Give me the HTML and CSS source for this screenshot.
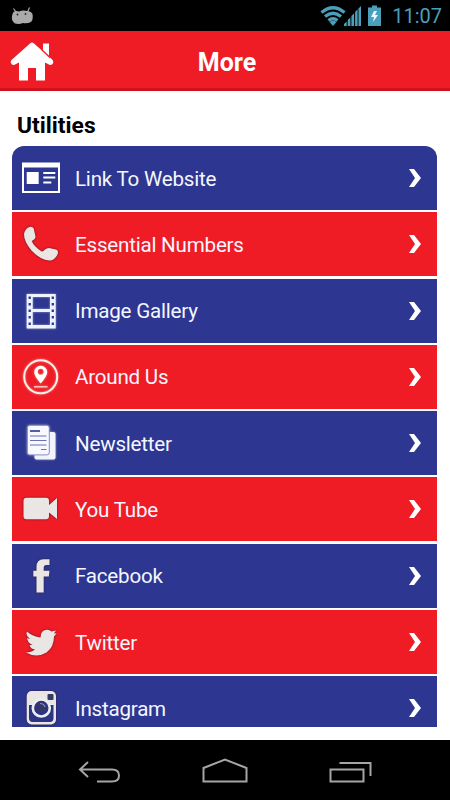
FILE: index.html
```html
<!DOCTYPE html>
<html lang="en">
<head>
  <meta charset="UTF-8" />
  <title>More</title>
  <meta name="viewport" content="width=device-width, initial-scale=1.0" />
  <link rel="stylesheet" href="styles.css">
</head>
<body>
  <div class="status">
    <svg class="droid" width="23" height="18" viewBox="0 0 23 18">
      <path d="M2.500 1.500l2.500 3.500M18.500 .5l-2 4.500" stroke="#aaa" stroke-width="1.200"/>
      <path d="M3 4.500Q5 3.500 8 4.500Q12 3 16 4Q20 4 21.500 7Q22.500 12 20 15Q16 17 12 16Q8 17.500 4 16.500Q0 14 1 9Q1.500 5.500 3 4.500Z" fill="#aaa"/>
      <circle cx="6.500" cy="7.500" r=".9" fill="#222"/><circle cx="14.500" cy="7" r=".9" fill="#222"/>
    </svg>
    <svg class="signals" width="62" height="22" viewBox="0 0 62 22">
      <g fill="none" stroke="#4b9fba" stroke-width="3.300">
        <path d="M1.500 7.500Q13 -2 24.500 7.500"/>
        <path d="M5 11.500Q13 5 21 11.500"/>
        <path d="M8.500 15.500Q13 12 17.500 15.500"/>
      </g>
      <g fill="#4b9fba">
        <path d="M9.500 17Q13 14.500 16.500 17L13 21Z"/>
        <path d="M24 21v-2l2.700-2.500v4.500zM27.700 21v-6l2.700-2.500v8.500zM31.400 21v-10l2.700-2.700v12.700zM35.100 21v-14l2.500-2.700v16.700z"/>
        <path d="M38.500 21v-17.500l2.500-2.500v20z"/>
        <path d="M48 2.500h4v-2h5v2h4v18.500h-13z"/>
      </g>
      <path d="M54 6l-3 6h3l-1 5 5-7h-3l2-4z" fill="#e8fbff"/>
    </svg>
    <span class="clock">11:07</span>
  </div>

  <header>
    <svg class="home" width="44" height="40" viewBox="0 0 44 40">
      <path d="M20 1.500Q22 -.500 24 1.500L33 9.500V1.500H39V14L42.500 18Q44 20 42.500 22Q40.500 24 38 22L35 20.500V38.500H26V26H18V38.500H9V20.500L6 22Q3 24 1.500 22Q0 20 1.500 18Z" fill="#fff"/>
      <path d="M32 8L40.500 16" stroke="#ef1c25" stroke-width="1.400"/>
    </svg>
    <h1>More</h1>
  </header>

  <main>
    <h2>Utilities</h2>
    <ul class="list">
      <li>
        <svg class="icon" viewBox="0 0 40 40">
          <path fill-rule="evenodd" d="M1 4.500H39V35H1ZM3 9.500V33H37V9.500Z" fill="#fff"/>
          <path d="M5.700 14h12v12h-12zM22.300 14h12v2h-12zM22.300 18.500h12v2h-12zM22.300 23.500h8v2h-8z" fill="#fff"/>
        </svg>
        <span>Link To Website</span>
        <svg class="arrow" viewBox="0 0 12 18"><path d="M0 0H5L12 9L5 18H0L6 9Z"/></svg>
      </li>
      <li>
        <svg class="icon" viewBox="0 0 40 40">
          <path class="gray" d="M4 7Q6 3 9.500 2.700Q13 3 13 6L14.500 12.500Q14.500 15 10.700 17Q13 22.500 20 27Q21.500 28.500 24 25.500Q25.500 24 28 24L35 25.500Q38 26.500 36.500 30.500Q33.500 36.500 28.500 36.500Q19.500 36 10.500 26.500Q3 17.500 3 10.500Q3 8.500 4 7Z"/>
        </svg>
        <span>Essential Numbers</span>
        <svg class="arrow" viewBox="0 0 12 18"><path d="M0 0H5L12 9L5 18H0L6 9Z"/></svg>
      </li>
      <li>
        <svg class="icon glow" viewBox="0 0 40 40">
          <path fill-rule="evenodd" d="M5.700 3H34.700V37.400H5.700ZM11.700 6V18H29V6ZM11.700 21V34H29V21Z" fill="#eef4ff"/>
          <path d="M8.700 5.500V36M31.800 5.500V36" stroke="#2c3790" stroke-width="2.300" stroke-dasharray="2.500 4"/>
        </svg>
        <span>Image Gallery</span>
        <svg class="arrow" viewBox="0 0 12 18"><path d="M0 0H5L12 9L5 18H0L6 9Z"/></svg>
      </li>
      <li>
        <svg class="icon glow" viewBox="0 0 40 40">
          <circle cx="19.700" cy="19.800" r="16.500" fill="none" stroke="#fff0e8" stroke-width="2"/>
          <path fill-rule="evenodd" d="M19.700 26.500Q13.200 19 13.200 15.300A6.500 6.500 0 0 1 26.200 15.300Q26.200 19 19.700 26.500ZM19.700 11.800A3 3 0 1 0 19.700 17.800A3 3 0 1 0 19.700 11.800Z" fill="#fff"/>
          <path d="M13 29.800H26.500" stroke="#ffd8ce" stroke-width="1.300"/>
        </svg>
        <span>Around Us</span>
        <svg class="arrow" viewBox="0 0 12 18"><path d="M0 0H5L12 9L5 18H0L6 9Z"/></svg>
      </li>
      <li>
        <svg class="icon glow" viewBox="0 0 40 40">
          <rect x="13.500" y="9" width="21" height="27.500" rx="2" fill="#f2f3fc"/>
          <rect x="6.300" y="2.300" width="22" height="29.600" rx="2.500" fill="#f8f9ff" stroke="#6870b5" stroke-width=".8"/>
          <path d="M9 8h10" stroke="#555da5" stroke-width="2"/>
          <path d="M9 13h16.500M9 17.500h16.500M9 22h16.500M20 26.500h5.500" stroke="#6a71b3" stroke-width="1.200"/>
        </svg>
        <span>Newsletter</span>
        <svg class="arrow" viewBox="0 0 12 18"><path d="M0 0H5L12 9L5 18H0L6 9Z"/></svg>
      </li>
      <li>
        <svg class="icon" viewBox="0 0 40 40">
          <path class="gray" d="M5.500 8.700H25Q28 8.700 28 12V16L36 9V30L28 23.500V27Q28 30.200 25 30.200H5.500Q2.500 30.200 2.500 27V12Q2.500 8.700 5.500 8.700Z"/>
        </svg>
        <span>You Tube</span>
        <svg class="arrow" viewBox="0 0 12 18"><path d="M0 0H5L12 9L5 18H0L6 9Z"/></svg>
      </li>
      <li>
        <svg class="icon" viewBox="0 0 40 40">
          <path class="gray" d="M15.500 36.600V20.500H12.300V14.700H15.500V11Q15.500 3.200 22.500 3.200H28.500V9H25Q22.700 9 22.700 11.500V14.700H28.500L27.800 20.500H22.700V36.600Z"/>
        </svg>
        <span>Facebook</span>
        <svg class="arrow" viewBox="0 0 12 18"><path d="M0 0H5L12 9L5 18H0L6 9Z"/></svg>
      </li>
      <li>
        <svg class="icon" viewBox="0 0 40 40">
          <path class="gray" d="M6 9.500Q11.500 14.500 19.500 15.500Q19.500 8.500 25.500 7.800Q28.500 7.500 30.500 9.500L35 8.500L33 11.500L35.700 11.200L33 14.500Q33 25 25.500 30.500Q15.500 36.500 5 30.500Q10.500 30.500 14 27.500Q9.500 27 8.500 23H11.500Q6.500 21 6 16L9 17Q4 13.500 6 9.500Z"/>
        </svg>
        <span>Twitter</span>
        <svg class="arrow" viewBox="0 0 12 18"><path d="M0 0H5L12 9L5 18H0L6 9Z"/></svg>
      </li>
      <li>
        <svg class="icon" viewBox="0 0 40 40">
          <rect class="gray" x="5.700" y="3" width="29.300" height="33.500" rx="5"/>
          <path d="M8 17H32.500V30Q32.500 34 29 34H11.500Q8 34 8 30Z" fill="#2c3584"/>
          <circle cx="20.300" cy="20" r="8.500" fill="#2c3584" stroke="#ededf3" stroke-width="2.600"/>
          <path d="M8 16.500h4M29 16.500h4" stroke="#ededf3"/>
          <circle cx="20.300" cy="19" r="5.500" fill="#34346e"/>
          <path d="M19 15.500Q23 15.500 24 19" fill="none" stroke="#8a8ec0" stroke-width="1.200"/>
          <rect x="26.500" y="6" width="6" height="6" rx="1" fill="#363b62"/>
        </svg>
        <span>Instagram</span>
        <svg class="arrow" viewBox="0 0 12 18"><path d="M0 0H5L12 9L5 18H0L6 9Z"/></svg>
      </li>
    </ul>
  </main>

  <nav>
    <svg width="44" height="26" viewBox="0 0 44 26"><path d="M10 2L2 9.500L10 17M2 9.500H34Q41 9.500 41 15.500T34 21.500H19"/></svg>
    <svg width="46" height="26" viewBox="0 0 46 26"><path d="M.5 21.500V8L22 -.5L43.500 8V21.500Z"/></svg>
    <svg width="44" height="26" viewBox="0 0 44 26"><path d="M1.500 9.500H34.500V21.500H1.500ZM10.500 3H41.500V16"/></svg>
  </nav>
</body>
</html>
```
FILE: styles.css
```css
* { box-sizing: border-box; }
body {
  margin: 0; height: 800px; overflow: hidden; background: #fff;
  font-family: Roboto, sans-serif; display: flex; flex-direction: column;
}
svg { display: block; flex: none; }

.status { height: 31px; background: #000; display: flex; align-items: center; padding: 0 8px 0 11px; }
.signals { margin: 0 10px 0 auto; }
.clock { color: #4b9fba; font-size: 20px; line-height: 31px; padding-top: 2px; }

header {
  height: 60px; background: #ef1c25; border-bottom: 3px solid #cf1220;
  display: grid; grid-template-columns: 44px 1fr 40px; align-items: center; padding: 0 10px;
}
h1 { margin: 7px 0 0; color: #fff; font-size: 25px; line-height: 30px; text-align: center; }
.home { margin-top: 5px; }

main { flex: 1; padding: 20px 13px 13px 12px; overflow: hidden; }
h2 { margin: 0 0 5px 5px; font-size: 22.8px; line-height: 30px; color: #000; }
.list {
  list-style: none; margin: 0; padding: 0; height: 581px; overflow: hidden;
  display: flex; flex-direction: column; gap: 2.3px; border-radius: 12px 12px 0 0;
}
li {
  flex: none; height: 64px; display: flex; align-items: center; padding: 0 16px 0 9px;
  background: #2d3791; color: #f4f6ff; font-size: 20.6px; letter-spacing: -0.22px;
}
li:nth-child(even) { background: #ef1c25; }
li span { flex: 1; margin-left: 14px; padding-top: 1.2px; }
.icon { width: 40px; height: 40px; }
.glow { filter: drop-shadow(0 0 1px rgba(255,255,255,0.5)); }
.gray { fill: #e9e6e4; filter: drop-shadow(0 0 1px rgba(50,20,40,0.8)); }
.arrow { width: 12px; height: 18px; fill: #fff; }

nav { height: 60px; background: #000; display: flex; align-items: center; justify-content: space-between; padding: 5px 77px 0 78px; }
nav svg { fill: none; stroke: #a5a5a5; stroke-width: 2; overflow: visible; }
```
